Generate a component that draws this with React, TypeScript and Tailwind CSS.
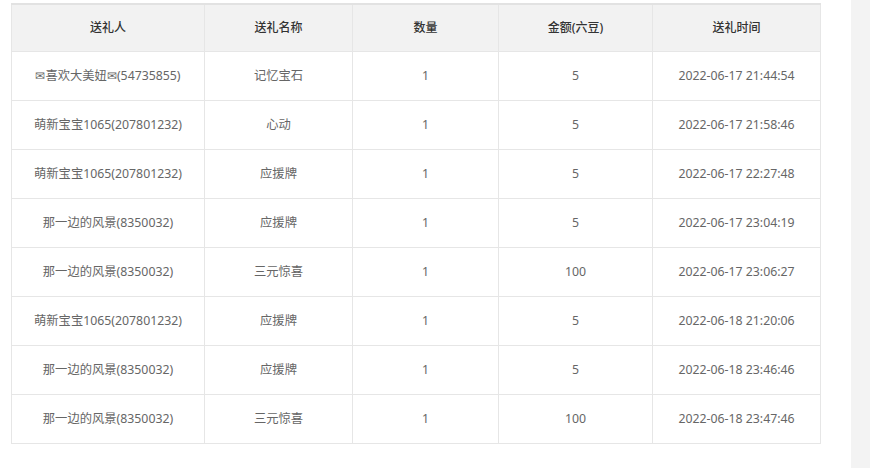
import React from 'react';

const rows = [
  ['✉喜欢大美妞✉(54735855)', '记忆宝石', '1', '5', '2022-06-17 21:44:54'],
  ['萌新宝宝1065(207801232)', '心动', '1', '5', '2022-06-17 21:58:46'],
  ['萌新宝宝1065(207801232)', '应援牌', '1', '5', '2022-06-17 22:27:48'],
  ['那一边的风景(8350032)', '应援牌', '1', '5', '2022-06-17 23:04:19'],
  ['那一边的风景(8350032)', '三元惊喜', '1', '100', '2022-06-17 23:06:27'],
  ['萌新宝宝1065(207801232)', '应援牌', '1', '5', '2022-06-18 21:20:06'],
  ['那一边的风景(8350032)', '应援牌', '1', '5', '2022-06-18 23:46:46'],
  ['那一边的风景(8350032)', '三元惊喜', '1', '100', '2022-06-18 23:47:46'],
];

const headers = ['送礼人', '送礼名称', '数量', '金额(六豆)', '送礼时间'];
const widths = ['w-[193px]', 'w-[148px]', 'w-[146px]', 'w-[154px]', 'w-[168px]'];

const App: React.FC = () => {
  return (
    <div
      className="flex w-full h-[468px] bg-white overflow-hidden"
      style={{ fontFamily: '"Noto Sans", "Noto Sans CJK SC", sans-serif' }}
    >
      <div className="w-[851px] pl-[11px] pt-[3px]">
        <table className="w-[809px] table-fixed border-collapse border-t-2 border-t-[#e2e2e2] text-[12px]">
          <thead>
            <tr className="bg-[#f2f2f2] h-[47px]">
              {headers.map((h, i) => (
                <th
                  key={h}
                  className={`${widths[i]} border border-[#e6e6e6] border-t-0 font-medium text-[#333] text-center`}
                >
                  {h}
                </th>
              ))}
            </tr>
          </thead>
          <tbody>
            {rows.map((r, ri) => (
              <tr key={ri} className="h-[49px]">
                {r.map((c, ci) => (
                  <td key={ci} className="border border-[#e6e6e6] pt-[2px] text-[12.3px] text-[#666] text-center">
                    {c}
                  </td>
                ))}
              </tr>
            ))}
          </tbody>
        </table>
      </div>
      <div className="flex-1 bg-[#f3f3f3]" />
    </div>
  );
};

export default App;
